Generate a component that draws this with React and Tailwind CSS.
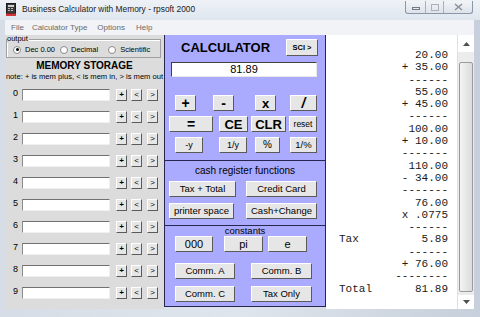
import React from "react";

/* ======================================================================
   DATA
   ====================================================================== */
const TAPE = [
  ["", "20.00"],
  ["", "+ 35.00"],
  ["", "------"],
  ["", "55.00"],
  ["", "+ 45.00"],
  ["", "------"],
  ["", "100.00"],
  ["", "+ 10.00"],
  ["", "-------"],
  ["", "110.00"],
  ["", "- 34.00"],
  ["", "-------"],
  ["", "76.00"],
  ["", "x .0775"],
  ["", "------"],
  ["Tax", "5.89"],
  ["", "------"],
  ["", "+ 76.00"],
  ["", "--------"],
  ["Total", "81.89"],
];

const MEMORY_ROWS = ["0", "1", "2", "3", "4", "5", "6", "7", "8", "9"];

/* ======================================================================
   SMALL PIECES
   ====================================================================== */
function Btn({ className = "", children }) {
  return (
    <div
      className={
        "flex items-center justify-center shrink-0 whitespace-nowrap bg-[#e6e6e6] border border-t-white border-l-white border-r-[#5a5a5a] border-b-[#5a5a5a] text-black leading-none " +
        className
      }
    >
      {children}
    </div>
  );
}

function Radio({ checked }) {
  return (
    <span className="w-[8px] h-[8px] rounded-full bg-white border border-[#8a8a8a] flex items-center justify-center shrink-0">
      {checked && <span className="w-[3px] h-[3px] rounded-full bg-black" />}
    </span>
  );
}

function AppIcon() {
  return (
    <svg width="10" height="13" viewBox="0 0 10 13" className="shrink-0">
      <rect x="0.5" y="0.5" width="9" height="10" fill="#3a3a3a" stroke="#1a1a1a" />
      <rect x="2" y="2" width="6" height="2" fill="#cfcfcf" />
      <rect x="2" y="5" width="2" height="1" fill="#bbbbbb" />
      <rect x="5" y="5" width="2" height="1" fill="#bbbbbb" />
      <rect x="2" y="7" width="2" height="1" fill="#bbbbbb" />
      <rect x="5" y="7" width="2" height="1" fill="#bbbbbb" />
      <rect x="0" y="10.5" width="10" height="2.5" fill="#d2343c" />
    </svg>
  );
}

/* ======================================================================
   APP
   ====================================================================== */
export default function App() {
  return (
    <div className="w-[480px] h-[317px] overflow-hidden flex flex-col bg-[#d9e0e8] font-['Liberation_Sans',Arial,sans-serif] text-black">
      {/* Title bar */}
      <div className="h-[20px] flex items-start bg-gradient-to-b from-[#eef2f7] to-[#dfe6ee]">
        <div className="flex items-center h-[19px] pl-[6px] gap-[6px]">
          <AppIcon />
          <span className="text-[8.4px] text-[#1a1a1a] leading-none whitespace-nowrap">
            Business Calculator with Memory - rpsoft 2000
          </span>
        </div>
        <div className="ml-auto mr-[7px] mt-[1px] flex h-[13px] border border-t-0 border-[#8b97a8] rounded-b-[3px] overflow-hidden bg-gradient-to-b from-[#f2f4f7] to-[#dde3ea]">
          <div className="w-[20px] flex items-center justify-center border-r border-[#a7b1be]">
            <span className="w-[8px] h-[3px] border border-[#707a86] mt-[3px]" />
          </div>
          <div className="w-[18px] flex items-center justify-center border-r border-[#a7b1be]">
            <span className="w-[8px] h-[7px] border border-[#a9b1bb]" />
          </div>
          <div className="w-[28px] flex items-center justify-center">
            <svg width="9" height="8" viewBox="0 0 9 8">
              <path d="M1 1 L8 7 M8 1 L1 7" stroke="#8c939c" strokeWidth="1.6" />
            </svg>
          </div>
        </div>
      </div>

      {/* Frame body */}
      <div className="flex-1 flex flex-col pl-[5px] pr-[6px] pb-[8px] bg-gradient-to-r from-[#d6dde6] via-[#dfe5ec] to-[#c6cfdb]">
        {/* Menu */}
        <div className="h-[15px] bg-[#f1f3f6] flex items-center text-[8px] text-[#6a6a6a] leading-none whitespace-nowrap">
          <span className="ml-[6px]">File</span>
          <span className="ml-[8px]">Calculator Type</span>
          <span className="ml-[10px]">Options</span>
          <span className="ml-[11px]">Help</span>
        </div>

        {/* Content */}
        <div className="h-[274px] flex">
          {/* Left: output + memory */}
          <div className="w-[159px] bg-[#dcdcdc] flex flex-col">
            <div className="relative mt-[4px] ml-[1px] w-[155px] h-[19px] border border-[#a0a0a0] shadow-[inset_1px_1px_0_#ffffff] flex items-center pl-[6px] pt-[2px] text-[7.5px] leading-none whitespace-nowrap">
              <span className="absolute -top-[5px] left-[0px] bg-[#dcdcdc] pr-[1px] text-[7.5px] leading-[8px]">output</span>
              <Radio checked />
              <span className="ml-[4px]">Dec 0.00</span>
              <span className="ml-[5px]"><Radio /></span>
              <span className="ml-[3px]">Decimal</span>
              <span className="ml-[10px]"><Radio /></span>
              <span className="ml-[4px]">Scientific</span>
            </div>

            <div className="mt-[2px] h-[12px] flex items-center justify-center text-[10px] font-bold leading-none">
              MEMORY STORAGE
            </div>
            <div className="h-[10px] flex items-center justify-center text-[7.6px] leading-none whitespace-nowrap">
              note: + is mem plus, &lt; is mem in, &gt; is mem out
            </div>

            <div className="mt-[7px] flex flex-col gap-[10px]">
              {MEMORY_ROWS.map((n) => (
                <div key={n} className="h-[12px] flex items-center pl-[8px]">
                  <span className="w-[9px] text-[9px] leading-none -mt-[3px]">{n}</span>
                  <div className="w-[88px] h-[12px] bg-white border border-t-[#707070] border-l-[#8a8a8a] border-r-[#f0f0f0] border-b-[#f0f0f0]" />
                  <Btn className="ml-[6px] w-[11px] h-[12px] text-[8px] font-bold">+</Btn>
                  <Btn className="ml-[4px] w-[11px] h-[12px] text-[8px]">&lt;</Btn>
                  <Btn className="ml-[5px] w-[11px] h-[12px] text-[8px]">&gt;</Btn>
                </div>
              ))}
            </div>
          </div>

          {/* Middle: calculator */}
          <div className="w-[162px] h-[272px] bg-[#aaaaff] border border-t-0 border-[#262650] flex flex-col">
            {/* Section 1 */}
            <div className="h-[126px] flex flex-col border-b border-[#262650]">
              <div className="mt-[4px] h-[17px] flex items-center">
                <span className="ml-[16px] text-[13px] font-bold leading-none">CALCULATOR</span>
                <Btn className="ml-auto mr-[7px] w-[32px] h-[17px] text-[7.5px] font-bold">SCI &gt;</Btn>
              </div>
              <div className="mt-[6px] ml-[6px] w-[146px] h-[15px] bg-white border border-t-[#404040] border-l-[#404040] border-r-[#e8e8e8] border-b-[#e8e8e8] flex items-center justify-center text-[11px] leading-none">
                81.89
              </div>
              <div className="mt-[18px] h-[16px] flex">
                <Btn className="ml-[10px] w-[21px] h-[16px] text-[14px] font-bold">+</Btn>
                <Btn className="ml-[17px] w-[21px] h-[16px] text-[14px] font-bold">-</Btn>
                <Btn className="ml-[21px] w-[21px] h-[16px] text-[13px] font-bold">x</Btn>
                <Btn className="ml-[14px] w-[27px] h-[16px] text-[14px] font-bold italic">/</Btn>
              </div>
              <div className="mt-[5px] h-[16px] flex">
                <Btn className="ml-[4px] w-[44px] h-[16px] text-[14px] font-bold">=</Btn>
                <Btn className="ml-[6px] w-[29px] h-[16px] text-[13px] font-bold">CE</Btn>
                <Btn className="ml-[3px] w-[35px] h-[16px] text-[13px] font-bold">CLR</Btn>
                <Btn className="ml-[3px] w-[28px] h-[16px] text-[8.5px]">reset</Btn>
              </div>
              <div className="mt-[5px] h-[16px] flex">
                <Btn className="ml-[10px] w-[28px] h-[16px] text-[9px]">-y</Btn>
                <Btn className="ml-[16px] w-[28px] h-[16px] text-[9px]">1/y</Btn>
                <Btn className="ml-[8px] w-[25px] h-[16px] text-[10px]">%</Btn>
                <Btn className="ml-[10px] w-[27px] h-[16px] text-[9.5px]">1/%</Btn>
              </div>
            </div>

            {/* Section 2: cash register */}
            <div className="h-[65px] flex flex-col border-b border-[#262650]">
              <div className="mt-[4px] h-[12px] flex items-center justify-center text-[10px] leading-none">
                cash register functions
              </div>
              <div className="mt-[4px] h-[16px] flex">
                <Btn className="ml-[4px] w-[67px] h-[16px] text-[9.5px]">Tax + Total</Btn>
                <Btn className="ml-[10px] w-[71px] h-[16px] text-[9.5px]">Credit Card</Btn>
              </div>
              <div className="mt-[6px] h-[16px] flex">
                <Btn className="ml-[4px] w-[65px] h-[16px] text-[9.5px]">printer space</Btn>
                <Btn className="ml-[12px] w-[71px] h-[16px] text-[9.5px]">Cash+Change</Btn>
              </div>
            </div>

            {/* Section 3: constants */}
            <div className="flex-1 flex flex-col">
              <div className="h-[10px] flex items-center justify-center text-[9.5px] leading-none">constants</div>
              <div className="h-[16px] flex">
                <Btn className="ml-[10px] w-[38px] h-[16px] text-[11px]">000</Btn>
                <Btn className="ml-[11px] w-[39px] h-[16px] text-[11px]">pi</Btn>
                <Btn className="ml-[5px] w-[39px] h-[16px] text-[11px]">e</Btn>
              </div>
              <div className="mt-[11px] h-[16px] flex">
                <Btn className="ml-[10px] w-[60px] h-[16px] text-[9.5px]">Comm. A</Btn>
                <Btn className="ml-[16px] w-[61px] h-[16px] text-[9.5px]">Comm. B</Btn>
              </div>
              <div className="mt-[7px] h-[16px] flex">
                <Btn className="ml-[10px] w-[60px] h-[16px] text-[9.5px]">Comm. C</Btn>
                <Btn className="ml-[16px] w-[61px] h-[16px] text-[9.5px]">Tax Only</Btn>
              </div>
            </div>
          </div>

          {/* Right: tape */}
          <div className="w-[131px] bg-white pt-[14px] pl-[13px] pr-[9px] font-['Liberation_Mono',monospace] text-[11px] leading-[12.3px] text-[#1a1a1a]">
            {TAPE.map(([l, r], i) => (
              <div key={i} className="flex justify-between whitespace-pre">
                <span>{l}</span>
                <span>{r}</span>
              </div>
            ))}
          </div>

          {/* Scrollbar */}
          <div className="w-[17px] bg-[#ececec] border-l border-[#e0e0e0] flex flex-col">
            <div className="h-[17px] flex items-center justify-center bg-white">
              <svg width="7" height="4" viewBox="0 0 7 4">
                <path d="M0 4 L3.5 0 L7 4 Z" fill="#505050" />
              </svg>
            </div>
            <div className="flex-1 px-[1px] pt-[10px] pb-[3px]">
              <div className="h-full rounded-[2px] border border-[#9a9a9a] bg-gradient-to-r from-[#f4f4f4] to-[#dcdcdc]" />
            </div>
            <div className="h-[14px] flex items-center justify-center bg-white">
              <svg width="7" height="4" viewBox="0 0 7 4">
                <path d="M0 0 L3.5 4 L7 0 Z" fill="#505050" />
              </svg>
            </div>
          </div>
        </div>
      </div>
    </div>
  );
}
